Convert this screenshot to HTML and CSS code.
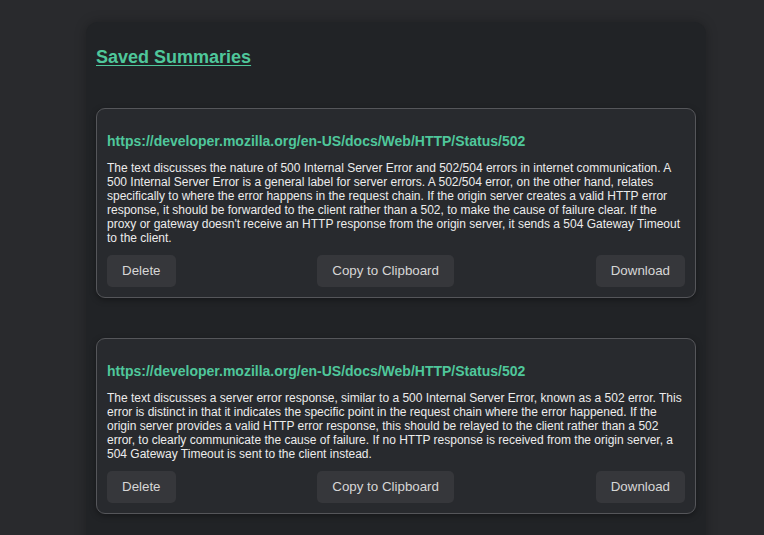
FILE: index.html
```html
<!DOCTYPE html>
<html lang="en">
<head>
<meta charset="utf-8">
<title>Saved Summaries</title>
<link rel="stylesheet" href="styles.css">
</head>
<body>
<main class="panel">
  <h2 class="title">Saved Summaries</h2>
  <div class="list">
    <section class="card">
      <h3 class="url">https://developer.mozilla.org/en-US/docs/Web/HTTP/Status/502</h3>
      <p class="summary">The text discusses the nature of 500 Internal Server Error and 502/504 errors in internet communication. A 500 Internal Server Error is a general label for server errors. A 502/504 error, on the other hand, relates specifically to where the error happens in the request chain. If the origin server creates a valid HTTP error response, it should be forwarded to the client rather than a 502, to make the cause of failure clear. If the proxy or gateway doesn't receive an HTTP response from the origin server, it sends a 504 Gateway Timeout to the client.</p>
      <div class="actions">
        <button class="btn">Delete</button>
        <button class="btn">Copy to Clipboard</button>
        <button class="btn">Download</button>
      </div>
    </section>
    <section class="card">
      <h3 class="url">https://developer.mozilla.org/en-US/docs/Web/HTTP/Status/502</h3>
      <p class="summary">The text discusses a server error response, similar to a 500 Internal Server Error, known as a 502 error. This error is distinct in that it indicates the specific point in the request chain where the error happened. If the origin server provides a valid HTTP error response, this should be relayed to the client rather than a 502 error, to clearly communicate the cause of failure. If no HTTP response is received from the origin server, a 504 Gateway Timeout is sent to the client instead.</p>
      <div class="actions">
        <button class="btn">Delete</button>
        <button class="btn">Copy to Clipboard</button>
        <button class="btn">Download</button>
      </div>
    </section>
  </div>
</main>
</body>
</html>
```

FILE: styles.css
```css
html, body {
  margin: 0;
  padding: 0;
  background: #292a2d;
  font-family: "Liberation Sans", Arial, Helvetica, sans-serif;
  color: #e8e8e8;
}

body {
  padding: 22px 0 0 86px;
}

.panel {
  width: 600px;
  padding: 10px 10px 40px;
  background: #212326;
  border-radius: 12px;
  box-shadow: 0 0 12px rgba(0, 0, 0, 0.25);
}

.title {
  margin: 15px 0 40px;
  font-size: 18px;
  font-weight: bold;
  color: #4fc79b;
  text-decoration: underline;
  text-underline-offset: 2px;
}

.list {
  display: flex;
  flex-direction: column;
  gap: 40px;
}

.card {
  background: #282a2e;
  border: 1px solid #55565a;
  border-radius: 9px;
  padding: 11px 10px 10px 10px;
  box-shadow: 0 2px 6px rgba(0, 0, 0, 0.35);
}

.url {
  margin: 13px 0 12px;
  font-size: 14px;
  font-weight: bold;
  color: #4fc79b;
}

.summary {
  margin: 0 0 10px;
  font-size: 12px;
  line-height: 14px;
  color: #ececec;
}

.actions {
  display: flex;
  justify-content: space-between;
}

.btn {
  font-family: "Liberation Sans", Arial, Helvetica, sans-serif;
  font-size: 13.33px;
  color: #d6d6d6;
  background: #36373b;
  border: none;
  border-radius: 5px;
  padding: 8px 15px;
  line-height: 16px;
}
```
